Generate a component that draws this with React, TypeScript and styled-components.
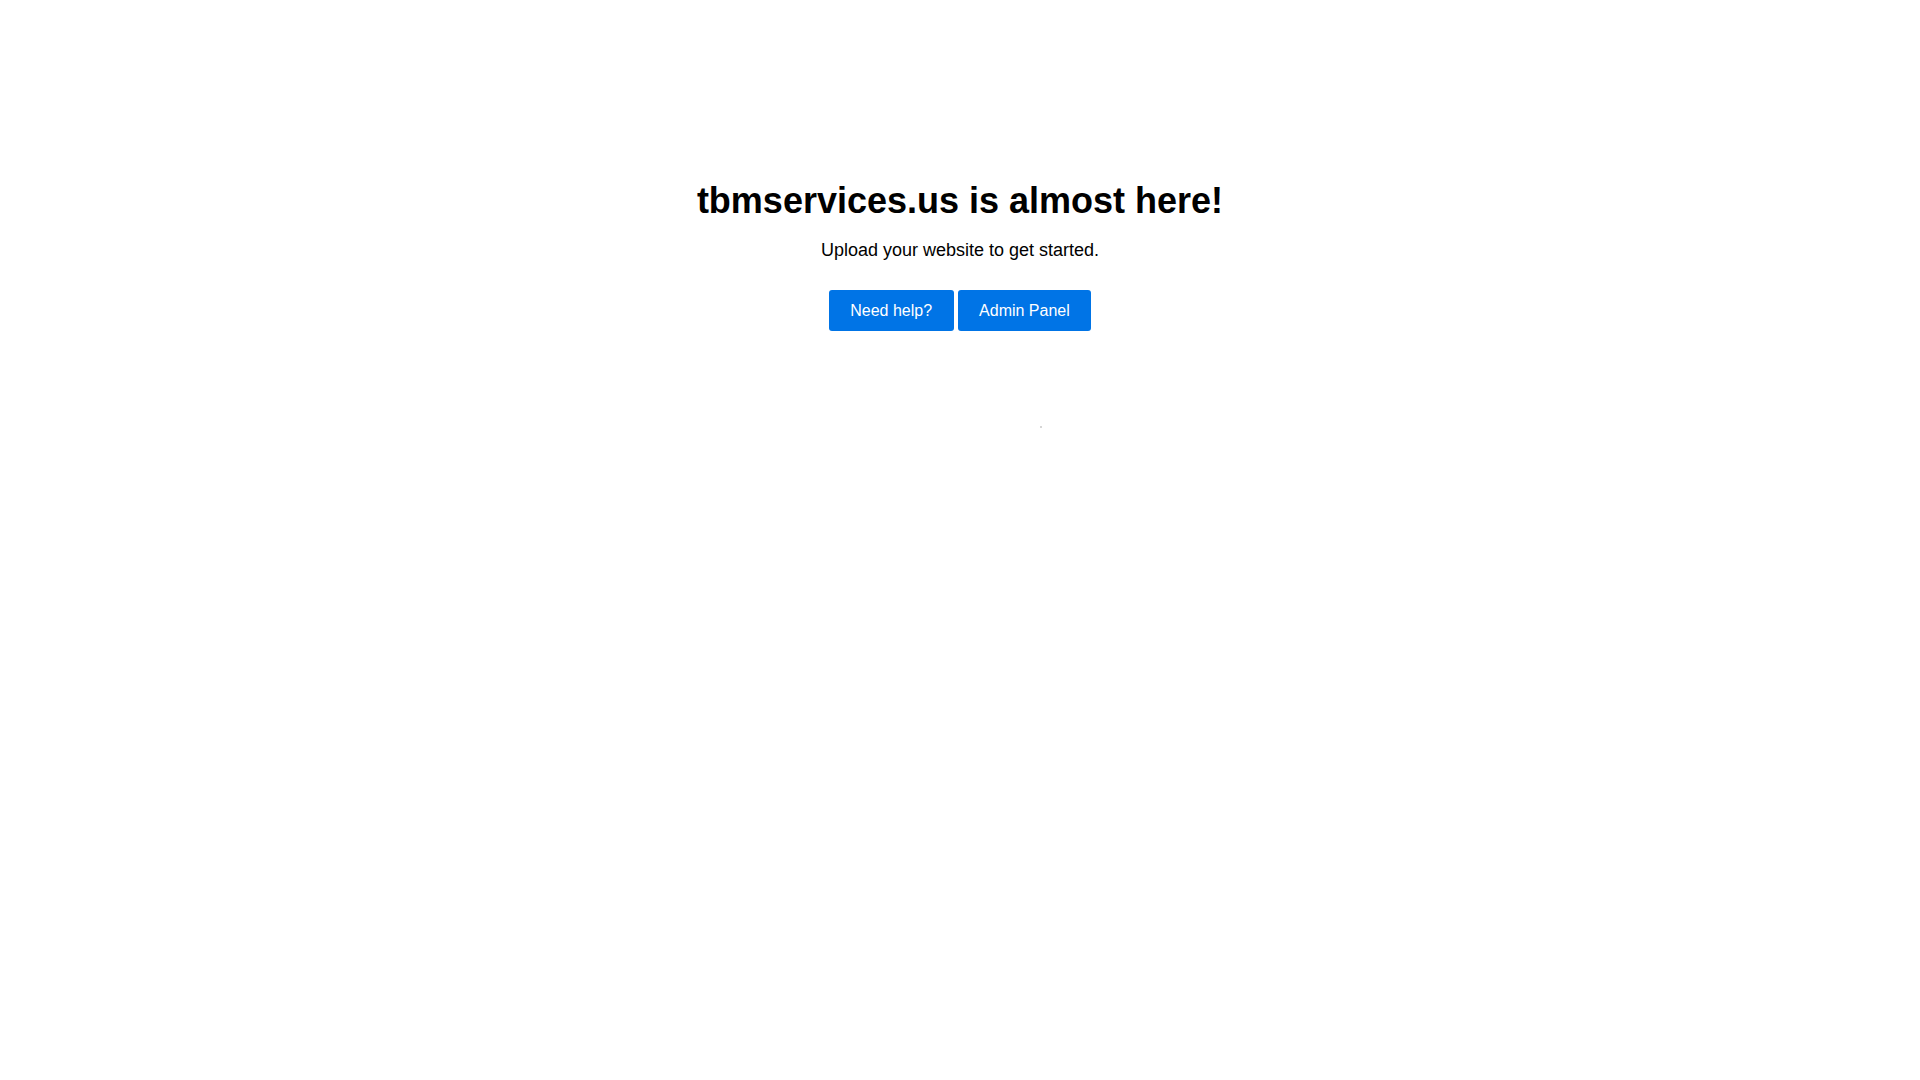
import React from 'react';
import styled, { createGlobalStyle } from 'styled-components';

const GlobalStyle = createGlobalStyle`
  html, body {
    margin: 0;
    padding: 0;
    background: #ffffff;
  }
  body {
    font-family: "Liberation Sans", Arial, Helvetica, sans-serif;
    color: #000000;
  }
`;

const Page = styled.main`
  display: flex;
  flex-direction: column;
  align-items: center;
  padding-top: 181px;
  min-height: 100vh;
  box-sizing: border-box;
`;

const Title = styled.h1`
  margin: 0;
  font-size: 36px;
  font-weight: 700;
  line-height: 40px;
  text-align: center;
`;

const Subtitle = styled.p`
  margin: 19px 0 0;
  font-size: 18px;
  line-height: 20px;
  text-align: center;
`;

const Actions = styled.div`
  display: flex;
  gap: 4px;
  margin-top: 30px;
`;

const Button = styled.a`
  display: inline-flex;
  align-items: center;
  justify-content: center;
  box-sizing: border-box;
  height: 41px;
  padding: 0 21.5px;
  background: #0074e6;
  color: #ffffff;
  font-size: 16px;
  text-decoration: none;
  border-radius: 3px;
  cursor: pointer;
`;

const Pixel = styled.span`
  display: block;
  width: 2px;
  height: 2px;
  margin: 95px 0 0 162px;
  background: #d6d6d6;
`;

const App: React.FC = () => {
  return (
    <>
      <GlobalStyle />
      <Page>
        <Title>tbmservices.us is almost here!</Title>
        <Subtitle>Upload your website to get started.</Subtitle>
        <Actions>
          <Button href="#">Need help?</Button>
          <Button href="#">Admin Panel</Button>
        </Actions>
        <Pixel />
      </Page>
    </>
  );
};

export default App;
